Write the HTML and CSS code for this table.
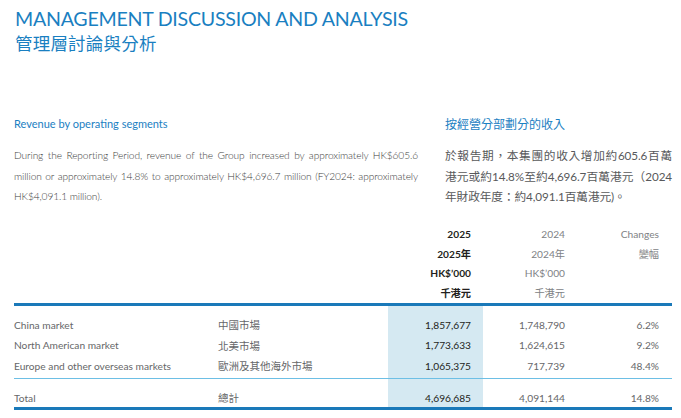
FILE: index.html
```html
<!DOCTYPE html>
<html lang="en">
<head>
<meta charset="utf-8">
<title>Management Discussion and Analysis</title>
<link rel="stylesheet" href="styles.css">
</head>
<body>
<div class="page">
  <header class="titles">
    <h1 class="title-en">MANAGEMENT DISCUSSION AND ANALYSIS</h1>
    <div class="title-cn">管理層討論與分析</div>
  </header>

  <section class="columns">
    <div class="col">
      <h2 class="heading">Revenue by operating segments</h2>
      <p class="para">During the Reporting Period, revenue of the Group increased by approximately HK$605.6 million or approximately 14.8% to approximately HK$4,696.7 million (FY2024: approximately HK$4,091.1 million).</p>
    </div>
    <div class="col">
      <h2 class="heading heading-cn">按經營分部劃分的收入</h2>
      <p class="para para-cn"><span class="jline">於報告期，本集團的收入增加約605.6百萬</span><span class="jline">港元或約14.8%至約4,696.7百萬港元（2024</span>年財政年度：約4,091.1百萬港元)。</p>
    </div>
  </section>

  <section class="table">
    <div class="thead grid">
      <div></div><div></div><div class="num cur">2025</div><div class="num">2024</div><div class="num">Changes</div>
      <div></div><div></div><div class="num cur">2025年</div><div class="num">2024年</div><div class="num">變幅</div>
      <div></div><div></div><div class="num cur">HK$’000</div><div class="num">HK$’000</div><div class="num"></div>
      <div></div><div></div><div class="num cur">千港元</div><div class="num">千港元</div><div class="num"></div>
    </div>
    <div class="tbody grid hl">
      <div>China market</div><div class="cn">中國市場</div><div class="num cur">1,857,677</div><div class="num">1,748,790</div><div class="num">6.2%</div>
      <div>North American market</div><div class="cn">北美市場</div><div class="num cur">1,773,633</div><div class="num">1,624,615</div><div class="num">9.2%</div>
      <div>Europe and other overseas markets</div><div class="cn">歐洲及其他海外市場</div><div class="num cur">1,065,375</div><div class="num">717,739</div><div class="num">48.4%</div>
    </div>
    <div class="tfoot grid hl">
      <div>Total</div><div class="cn">總計</div><div class="num cur">4,696,685</div><div class="num">4,091,144</div><div class="num">14.8%</div>
    </div>
  </section>
</div>
</body>
</html>
```

FILE: styles.css
```css
* { box-sizing: border-box; }
html, body { margin: 0; padding: 0; background: #ffffff; }
body {
  font-family: "Lato", "Noto Sans CJK TC", sans-serif;
  color: #666769;
}
.page {
  width: 681px;
  padding: 7px 9px 0 14px;
}
.title-en {
  margin: 0 0 0 1px;
  font-family: "Lato", sans-serif;
  font-weight: 400;
  font-size: 19.6px;
  line-height: 24px;
  color: #1a7fc1;
  letter-spacing: -0.25px;
}
.title-cn {
  margin-left: 1px;
  font-family: "Noto Sans CJK TC", sans-serif;
  font-size: 17.5px;
  line-height: 24px;
  color: #1a7fc1;
  letter-spacing: 0.2px;
}
.columns {
  display: grid;
  grid-template-columns: 404px 227px;
  column-gap: 27px;
  margin-top: 61px;
}
.heading {
  margin: 0;
  font-size: 11px;
  font-weight: 400;
  line-height: 16px;
  color: #1b80c2;
}
.heading-cn {
  font-family: "Noto Sans CJK TC", sans-serif;
  font-size: 12px;
}
.para {
  margin: 13px 0 0;
  font-size: 10.2px;
  font-weight: 300;
  line-height: 20.5px;
  letter-spacing: -0.12px;
  text-align: justify;
  color: #3d3e40;
}
.para-cn {
  font-family: "Lato", "Noto Sans CJK TC", sans-serif;
  font-size: 11.7px;
  font-weight: 400;
  letter-spacing: -0.1px;
  color: #58595b;
}
.jline {
  display: block;
  white-space: nowrap;
  text-align: justify;
  text-align-last: justify;
  text-justify: inter-character;
}
.table {
  width: 658px;
  margin-top: 18px;
  font-size: 10.2px;
}
.grid {
  display: grid;
  grid-template-columns: 204px 170px 95px 95px 94px;
  grid-auto-rows: 20.5px;
  align-items: center;
}
.thead {
  grid-auto-rows: 19.5px;
  border-bottom: 3px solid #1a79b9;
  color: #808285;
}
.thead .cur { color: #231f20; font-weight: 700; }
.num { text-align: right; padding-right: 13px; }
.cur { padding-right: 12px; }
.cn { font-family: "Noto Sans CJK TC", sans-serif; font-size: 10.5px; }
.hl {
  background: linear-gradient(to right, transparent 374px, #d5e9f2 374px, #d5e9f2 469px, transparent 469px);
}
.tbody {
  padding: 9px 0 2px;
  border-bottom: 1px solid #6dbfe5;
}
.tbody .cur, .tfoot .cur { color: #231f20; }
.tfoot {
  grid-auto-rows: 19px;
  padding-top: 9px;
  border-bottom: 3px solid #1a79b9;
}
```
